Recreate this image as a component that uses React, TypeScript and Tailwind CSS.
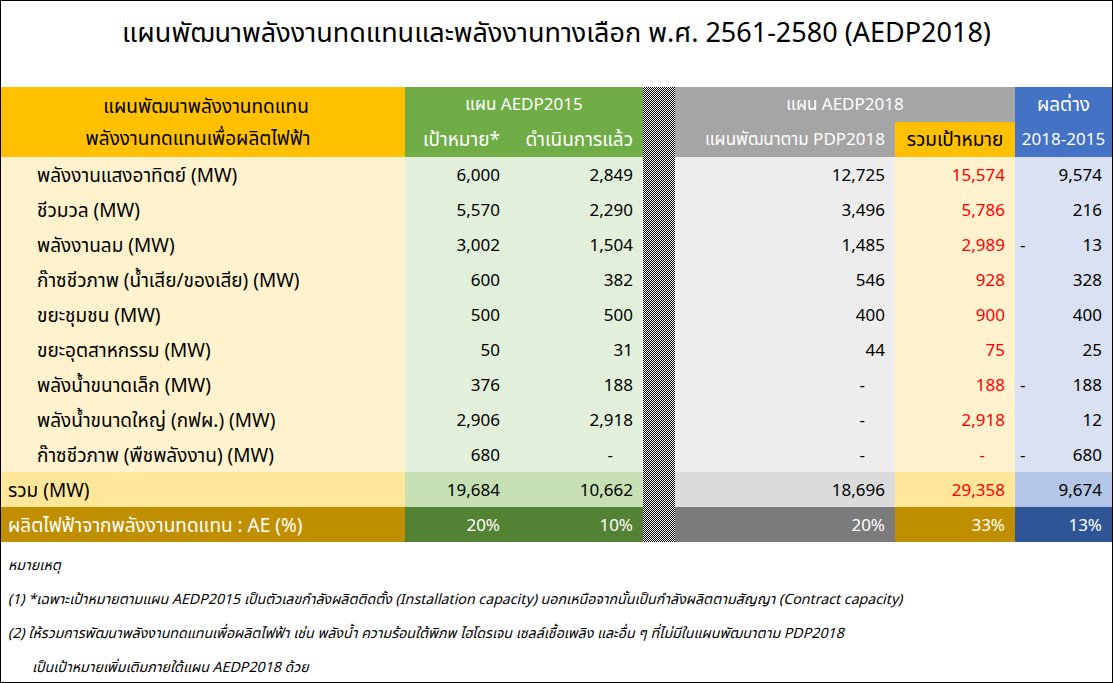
import React from 'react';

type Row = {
  label: string;
  target: string;
  done: string;
  pdp: string;
  total: string;
  neg: boolean;
  diff: string;
};

const rows: Row[] = [
  { label: 'พลังงานแสงอาทิตย์ (MW)', target: '6,000', done: '2,849', pdp: '12,725', total: '15,574', neg: false, diff: '9,574' },
  { label: 'ชีวมวล (MW)', target: '5,570', done: '2,290', pdp: '3,496', total: '5,786', neg: false, diff: '216' },
  { label: 'พลังงานลม (MW)', target: '3,002', done: '1,504', pdp: '1,485', total: '2,989', neg: true, diff: '13' },
  { label: 'ก๊าซชีวภาพ (น้ำเสีย/ของเสีย) (MW)', target: '600', done: '382', pdp: '546', total: '928', neg: false, diff: '328' },
  { label: 'ขยะชุมชน (MW)', target: '500', done: '500', pdp: '400', total: '900', neg: false, diff: '400' },
  { label: 'ขยะอุตสาหกรรม (MW)', target: '50', done: '31', pdp: '44', total: '75', neg: false, diff: '25' },
  { label: 'พลังน้ำขนาดเล็ก (MW)', target: '376', done: '188', pdp: '-', total: '188', neg: true, diff: '188' },
  { label: 'พลังน้ำขนาดใหญ่ (กฟผ.) (MW)', target: '2,906', done: '2,918', pdp: '-', total: '2,918', neg: false, diff: '12' },
  { label: 'ก๊าซชีวภาพ (พืชพลังงาน) (MW)', target: '680', done: '-', pdp: '-', total: '-', neg: true, diff: '680' },
];

// accounting-style dash sits a bit left of the numbers
const num = (v: string) => (v === '-' ? 'pr-[30px]' : 'pr-[10px]');

const cell = 'flex items-center pt-[5px]';
const head = 'flex items-center pt-[3px]';

export default function App() {
  return (
    <div className="w-[1113px] h-[683px] border border-black bg-white text-black font-['Tahoma','Noto_Sans_Thai','Noto_Sans',sans-serif] overflow-hidden">
      <div className="h-[86px] flex items-center justify-center text-[27px] pb-[20px]">
        แผนพัฒนาพลังงานทดแทนและพลังงานทางเลือก พ.ศ. 2561-2580 (AEDP2018)
      </div>

      <div className="grid grid-cols-[404px_105px_133px_32px_220px_120px_97px] auto-rows-[35px] text-[17px]">
        <div className="col-start-4 row-start-1 row-span-13 bg-[repeating-conic-gradient(#000_0%_25%,#fff_0%_50%)] bg-[length:2px_2px]" />

        {/* header */}
        <div className="row-span-2 bg-[#FFC000] flex flex-col items-center justify-around pt-[5px] pb-[1px] pr-[10px] text-[19px]">
          <span className="pl-[16px]">แผนพัฒนาพลังงานทดแทน</span>
          <span>พลังงานทดแทนเพื่อผลิตไฟฟ้า</span>
        </div>
        <div className={`col-span-2 bg-[#70AD47] text-white justify-center ${head}`}>แผน AEDP2015</div>
        <div className={`col-span-2 bg-[#A5A5A5] text-white justify-center ${head}`}>แผน AEDP2018</div>
        <div className={`bg-[#4472C4] text-white justify-center text-[19px] ${head}`}>ผลต่าง</div>

        <div className={`bg-[#70AD47] text-white justify-end pr-[10px] text-[19px] ${head}`}>เป้าหมาย*</div>
        <div className={`bg-[#70AD47] text-white justify-end pr-[10px] text-[19px] ${head}`}>ดำเนินการแล้ว</div>
        <div className={`bg-[#A5A5A5] text-white justify-end pr-[10px] ${head}`}>แผนพัฒนาตาม PDP2018</div>
        <div className={`bg-[#FFC000] justify-center text-[19px] ${head}`}>รวมเป้าหมาย</div>
        <div className={`bg-[#4472C4] text-white justify-center ${head}`}>2018-2015</div>

        {/* body */}
        {rows.map((r) => (
          <React.Fragment key={r.label}>
            <div className={`bg-[#FFF2CC] pl-[36px] text-[19px] ${cell}`}>{r.label}</div>
            <div className={`bg-[#E2EFDA] justify-end ${num(r.target)} ${cell}`}>{r.target}</div>
            <div className={`bg-[#E2EFDA] justify-end ${num(r.done)} ${cell}`}>{r.done}</div>
            <div className={`bg-[#EDEDED] justify-end ${num(r.pdp)} ${cell}`}>{r.pdp}</div>
            <div className={`bg-[#FFF2CC] text-[#FF0000] justify-end ${num(r.total)} ${cell}`}>{r.total}</div>
            <div className={`bg-[#D9E1F2] justify-between pl-[5px] pr-[10px] ${cell}`}>
              <span>{r.neg ? '-' : ''}</span>
              <span>{r.diff}</span>
            </div>
          </React.Fragment>
        ))}

        {/* totals */}
        <div className={`bg-[#FFE699] pl-[7px] text-[19px] ${cell}`}>รวม (MW)</div>
        <div className={`bg-[#C6E0B4] justify-end pr-[10px] ${cell}`}>19,684</div>
        <div className={`bg-[#C6E0B4] justify-end pr-[10px] ${cell}`}>10,662</div>
        <div className={`bg-[#DBDBDB] justify-end pr-[10px] ${cell}`}>18,696</div>
        <div className={`bg-[#FFE699] text-[#FF0000] justify-end pr-[10px] ${cell}`}>29,358</div>
        <div className={`bg-[#B4C6E7] justify-end pr-[10px] ${cell}`}>9,674</div>

        <div className={`bg-[#BF8F00] text-white pl-[7px] text-[19px] ${cell}`}>ผลิตไฟฟ้าจากพลังงานทดแทน : AE (%)</div>
        <div className={`bg-[#548235] text-white justify-end pr-[10px] ${cell}`}>20%</div>
        <div className={`bg-[#548235] text-white justify-end pr-[10px] ${cell}`}>10%</div>
        <div className={`bg-[#7B7B7B] text-white justify-end pr-[10px] ${cell}`}>20%</div>
        <div className={`bg-[#BF8F00] text-white justify-end pr-[10px] ${cell}`}>33%</div>
        <div className={`bg-[#2F5597] text-white justify-end pr-[10px] ${cell}`}>13%</div>
      </div>

      {/* notes */}
      <div className="pl-[7px] pt-[7px] text-[14.2px] italic leading-[34px]">
        <div>หมายเหตุ</div>
        <div>(1) *เฉพาะเป้าหมายตามแผน AEDP2015 เป็นตัวเลขกำลังผลิตติดตั้ง (Installation capacity) นอกเหนือจากนั้นเป็นกำลังผลิตตามสัญญา (Contract capacity)</div>
        <div>(2) ให้รวมการพัฒนาพลังงานทดแทนเพื่อผลิตไฟฟ้า เช่น พลังน้ำ ความร้อนใต้พิภพ ไฮโดรเจน เซลล์เชื้อเพลิง และอื่น ๆ ที่ไม่มีในแผนพัฒนาตาม PDP2018</div>
        <div className="pl-[24px]">เป็นเป้าหมายเพิ่มเติมภายใต้แผน AEDP2018 ด้วย</div>
      </div>
    </div>
  );
}
